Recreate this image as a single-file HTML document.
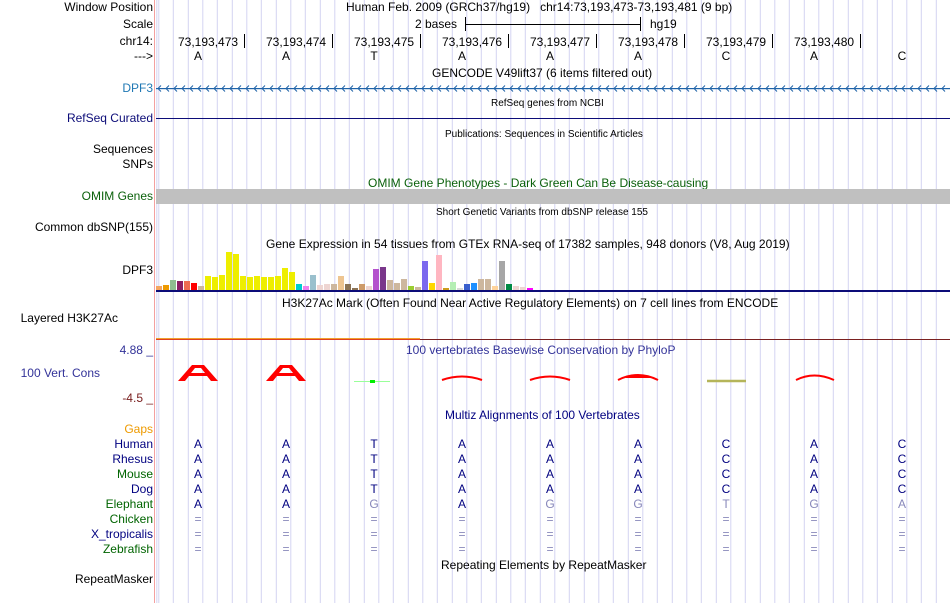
<!DOCTYPE html>
<html><head><meta charset="utf-8"><style>
html,body{margin:0;padding:0;background:#fff;}
body{width:950px;height:603px;position:relative;overflow:hidden;font-family:"Liberation Sans",sans-serif;font-size:12px;color:#000;}
.grid{position:absolute;left:156px;top:0;width:794px;height:603px;
background-image:repeating-linear-gradient(to right,#d4d4f2 0,#d4d4f2 1px,transparent 1px,transparent 14.667px);
background-position:2.3px 0;}
.pink{position:absolute;left:154px;top:0;width:1px;height:603px;background:#f4a0a0;}
.t{position:absolute;white-space:nowrap;line-height:14px;}
.l{position:absolute;right:797px;white-space:nowrap;line-height:14px;text-align:right;}
.c{position:absolute;white-space:nowrap;line-height:14px;transform:translateX(-50%);}
.sm{font-size:10px;}
.tick{position:absolute;width:1px;height:14px;top:34px;background:#000;}
.bar{position:absolute;bottom:313px;width:6px;}
.mz{position:absolute;font-size:12px;line-height:15px;transform:translateX(-50%);color:#000080;text-align:center;}
</style></head><body>
<div class="grid"></div>
<div class="pink"></div>

<div class="l" style="top:0">Window Position</div>
<div class="l" style="top:17px">Scale</div>
<div class="l" style="top:34px">chr14:</div>
<div class="l" style="top:49px">---&gt;</div>
<div class="l" style="top:81px;color:#1f78b4">DPF3</div>
<div class="l" style="top:111px;color:#0c0c78">RefSeq Curated</div>
<div class="l" style="top:142px">Sequences</div>
<div class="l" style="top:157px">SNPs</div>
<div class="l" style="top:189px;color:#0b610b">OMIM Genes</div>
<div class="l" style="top:220px">Common dbSNP(155)</div>
<div class="l" style="top:263px">DPF3</div>
<div class="l" style="top:311px;right:832px">Layered H3K27Ac</div>
<div class="l" style="top:343px;color:#333399">4.88 _</div>
<div class="l" style="top:366px;right:850px;color:#333399">100 Vert. Cons</div>
<div class="l" style="top:391px;color:#7a2020">-4.5 _</div>

<div class="l" style="top:422px;color:#ee9a00">Gaps</div>
<div class="l" style="top:437px;color:#000080">Human</div>
<div class="l" style="top:452px;color:#000080">Rhesus</div>
<div class="l" style="top:467px;color:#006400">Mouse</div>
<div class="l" style="top:482px;color:#000080">Dog</div>
<div class="l" style="top:497px;color:#006400">Elephant</div>
<div class="l" style="top:512px;color:#006400">Chicken</div>
<div class="l" style="top:527px;color:#000080">X_tropicalis</div>
<div class="l" style="top:542px;color:#006400">Zebrafish</div>
<div class="l" style="top:572px">RepeatMasker</div>

<div class="t" style="top:0;left:346px">Human Feb. 2009 (GRCh37/hg19)&nbsp;&nbsp;&nbsp;chr14:73,193,473-73,193,481 (9 bp)</div>
<div class="t" style="top:17px;left:415px">2 bases</div>
<div style="position:absolute;top:24px;left:465px;width:175px;height:1px;background:#000"></div>
<div style="position:absolute;top:17px;left:465px;width:1px;height:14px;background:#000"></div>
<div style="position:absolute;top:17px;left:640px;width:1px;height:14px;background:#000"></div>
<div class="t" style="top:17px;left:650px">hg19</div>

<div class="t" style="top:35px;left:178px">73,193,473</div><div class="tick" style="left:244px"></div>
<div class="t" style="top:35px;left:266px">73,193,474</div><div class="tick" style="left:332px"></div>
<div class="t" style="top:35px;left:354px">73,193,475</div><div class="tick" style="left:420px"></div>
<div class="t" style="top:35px;left:442px">73,193,476</div><div class="tick" style="left:508px"></div>
<div class="t" style="top:35px;left:530px">73,193,477</div><div class="tick" style="left:596px"></div>
<div class="t" style="top:35px;left:618px">73,193,478</div><div class="tick" style="left:684px"></div>
<div class="t" style="top:35px;left:706px">73,193,479</div><div class="tick" style="left:772px"></div>
<div class="t" style="top:35px;left:794px">73,193,480</div><div class="tick" style="left:860px"></div>

<div class="c" style="top:49px;left:198px">A</div>
<div class="c" style="top:49px;left:286px">A</div>
<div class="c" style="top:49px;left:374px">T</div>
<div class="c" style="top:49px;left:462px">A</div>
<div class="c" style="top:49px;left:550px">A</div>
<div class="c" style="top:49px;left:638px">A</div>
<div class="c" style="top:49px;left:726px">C</div>
<div class="c" style="top:49px;left:814px">A</div>
<div class="c" style="top:49px;left:902px">C</div>

<div class="t" style="top:66px;left:432px">GENCODE V49lift37 (6 items filtered out)</div>
<svg style="position:absolute;left:156px;top:84px" width="794" height="9">
<defs><pattern id="ar" x="0" y="0" width="8" height="9" patternUnits="userSpaceOnUse"><path d="M5 1.5 L2 4.5 L5 7.5" stroke="#1f63a8" fill="none" stroke-width="1"/></pattern></defs>
<rect x="0" y="4" width="794" height="1.2" fill="#1f63a8"/>
<rect x="0" y="0" width="794" height="9" fill="url(#ar)"/>
</svg>
<div class="t sm" style="top:97px;left:491px">RefSeq genes from NCBI</div>
<div style="position:absolute;left:156px;top:118px;width:794px;height:1px;background:#0c0c78"></div>
<div class="t sm" style="top:128px;left:445px">Publications: Sequences in Scientific Articles</div>
<div class="t" style="top:176px;left:368px;color:#0b610b">OMIM Gene Phenotypes - Dark Green Can Be Disease-causing</div>
<div style="position:absolute;left:156px;top:189px;width:794px;height:15px;background:#c0c0c0"></div>
<div class="t sm" style="top:206px;left:436px">Short Genetic Variants from dbSNP release 155</div>
<div class="t" style="top:237px;left:266px">Gene Expression in 54 tissues from GTEx RNA-seq of 17382 samples, 948 donors (V8, Aug 2019)</div>

<div style="position:absolute;left:156px;top:290px;width:794px;height:2px;background:#0c0c78"></div>
<div class="bar" style="left:156px;height:4px;background:#f4a460"></div>
<div class="bar" style="left:163px;height:5px;background:#ee9a00"></div>
<div class="bar" style="left:170px;height:10px;background:#8fbc8f"></div>
<div class="bar" style="left:177px;height:9px;background:#8b1c62"></div>
<div class="bar" style="left:184px;height:9px;background:#ee6a50"></div>
<div class="bar" style="left:191px;height:7px;background:#ff0000"></div>
<div class="bar" style="left:198px;height:4px;background:#cdb79e"></div>
<div class="bar" style="left:205px;height:14px;background:#eeee00"></div>
<div class="bar" style="left:212px;height:13px;background:#eeee00"></div>
<div class="bar" style="left:219px;height:15px;background:#eeee00"></div>
<div class="bar" style="left:226px;height:38px;background:#eeee00"></div>
<div class="bar" style="left:233px;height:36px;background:#eeee00"></div>
<div class="bar" style="left:240px;height:14px;background:#eeee00"></div>
<div class="bar" style="left:247px;height:13px;background:#eeee00"></div>
<div class="bar" style="left:254px;height:14px;background:#eeee00"></div>
<div class="bar" style="left:261px;height:13px;background:#eeee00"></div>
<div class="bar" style="left:268px;height:13px;background:#eeee00"></div>
<div class="bar" style="left:275px;height:14px;background:#eeee00"></div>
<div class="bar" style="left:282px;height:22px;background:#eeee00"></div>
<div class="bar" style="left:289px;height:18px;background:#eeee00"></div>
<div class="bar" style="left:296px;height:6px;background:#00cdcd"></div>
<div class="bar" style="left:303px;height:4px;background:#ee82ee"></div>
<div class="bar" style="left:310px;height:15px;background:#9ac0cd"></div>
<div class="bar" style="left:317px;height:5px;background:#eed5d2"></div>
<div class="bar" style="left:324px;height:6px;background:#eed5d2"></div>
<div class="bar" style="left:331px;height:6px;background:#cdb79e"></div>
<div class="bar" style="left:338px;height:14px;background:#eec591"></div>
<div class="bar" style="left:345px;height:6px;background:#8b7355"></div>
<div class="bar" style="left:352px;height:2px;background:#8b7355"></div>
<div class="bar" style="left:359px;height:6px;background:#cd9b6a"></div>
<div class="bar" style="left:366px;height:4px;background:#eed5d2"></div>
<div class="bar" style="left:373px;height:21px;background:#b452cd"></div>
<div class="bar" style="left:380px;height:23px;background:#7a378b"></div>
<div class="bar" style="left:387px;height:10px;background:#cdb79e"></div>
<div class="bar" style="left:394px;height:7px;background:#cdb79e"></div>
<div class="bar" style="left:401px;height:11px;background:#cdb79e"></div>
<div class="bar" style="left:408px;height:4px;background:#9acd32"></div>
<div class="bar" style="left:415px;height:3px;background:#cdb79e"></div>
<div class="bar" style="left:422px;height:29px;background:#7b68ee"></div>
<div class="bar" style="left:429px;height:7px;background:#ffd700"></div>
<div class="bar" style="left:436px;height:35px;background:#ffb6c1"></div>
<div class="bar" style="left:443px;height:2px;background:#cd9b1d"></div>
<div class="bar" style="left:450px;height:8px;background:#b4eeb4"></div>
<div class="bar" style="left:457px;height:2px;background:#d9d9d9"></div>
<div class="bar" style="left:464px;height:6px;background:#3a5fcd"></div>
<div class="bar" style="left:471px;height:7px;background:#1e90ff"></div>
<div class="bar" style="left:478px;height:11px;background:#cdb79e"></div>
<div class="bar" style="left:485px;height:11px;background:#cdb79e"></div>
<div class="bar" style="left:492px;height:4px;background:#ffd39b"></div>
<div class="bar" style="left:499px;height:29px;background:#a6a6a6"></div>
<div class="bar" style="left:506px;height:6px;background:#008b45"></div>
<div class="bar" style="left:513px;height:4px;background:#eed5d2"></div>
<div class="bar" style="left:520px;height:3px;background:#eed5d2"></div>
<div class="bar" style="left:527px;height:2px;background:#ff00ff"></div>

<div class="t" style="top:296px;left:282px">H3K27Ac Mark (Often Found Near Active Regulatory Elements) on 7 cell lines from ENCODE</div>
<div style="position:absolute;left:156px;top:338px;width:264px;height:2px;background:#f0a030"></div>
<div style="position:absolute;left:156px;top:339px;width:264px;height:1px;background:#e04020"></div>
<div style="position:absolute;left:420px;top:339px;width:530px;height:1px;background:#7a2020"></div>
<div class="t" style="top:343px;left:406px;color:#333399">100 vertebrates Basewise Conservation by PhyloP</div>

<svg style="position:absolute;left:156px;top:360px" width="794" height="30">
<g fill="#ff0000">
<path d="M22 21 L36 5 L48 5 L62 21 L55 21 L51 16 L33 16 L29 21 Z M35 13 L49 13 L45 8 L39 8 Z" fill-rule="evenodd"/>
<path d="M110 21 L124 5 L136 5 L150 21 L143 21 L139 16 L121 16 L117 21 Z M123 13 L137 13 L133 8 L127 8 Z" fill-rule="evenodd"/>
</g>
<path d="M198 21.5 L234 21.5" stroke="#9f9" stroke-width="1"/>
<rect x="214" y="20" width="5" height="3" fill="#00ee00"/>
<g fill="none" stroke="#ff0000" stroke-width="2">
<path d="M286 20 Q306 13 326 20"/>
<path d="M374 20 Q394 13 414 20"/>
<path d="M462 20 Q482 10 502 20 M470 17 L494 17"/>
<path d="M640 20 Q658 11 678 20"/>
</g>
<path d="M551 21 L590 21" stroke="#b5b55a" stroke-width="2.5"/>
</svg>

<div class="t" style="top:408px;left:445px;color:#000080">Multiz Alignments of 100 Vertebrates</div>

<div class="mz" style="left:198px;top:437px">A<br>A<br>A<br>A<br>A<br><span style="color:#8888bb">=<br>=<br>=</span></div>
<div class="mz" style="left:286px;top:437px">A<br>A<br>A<br>A<br>A<br><span style="color:#8888bb">=<br>=<br>=</span></div>
<div class="mz" style="left:374px;top:437px">T<br>T<br>T<br>T<br><span style="color:#8888bb">G<br>=<br>=<br>=</span></div>
<div class="mz" style="left:462px;top:437px">A<br>A<br>A<br>A<br>A<br><span style="color:#8888bb">=<br>=<br>=</span></div>
<div class="mz" style="left:550px;top:437px">A<br>A<br>A<br>A<br><span style="color:#8888bb">G<br>=<br>=<br>=</span></div>
<div class="mz" style="left:638px;top:437px">A<br>A<br>A<br>A<br><span style="color:#8888bb">G<br>=<br>=<br>=</span></div>
<div class="mz" style="left:726px;top:437px">C<br>C<br>C<br>C<br><span style="color:#8888bb">T<br>=<br>=<br>=</span></div>
<div class="mz" style="left:814px;top:437px">A<br>A<br>A<br>A<br><span style="color:#8888bb">G<br>=<br>=<br>=</span></div>
<div class="mz" style="left:902px;top:437px">C<br>C<br>C<br>C<br><span style="color:#8888bb">A<br>=<br>=<br>=</span></div>

<div class="t" style="top:558px;left:441px">Repeating Elements by RepeatMasker</div>
</body></html>
